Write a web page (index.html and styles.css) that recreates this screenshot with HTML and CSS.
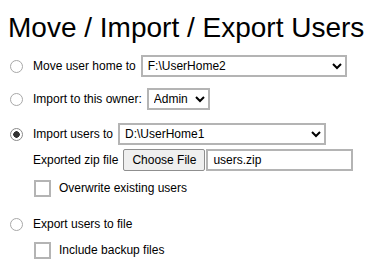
FILE: index.html
```html
<!DOCTYPE html>
<html lang="en">
<head>
    <meta charset="UTF-8">
    <title>Move / Import / Export Users</title>
    <link rel="stylesheet" href="styles.css">
</head>
<body>
    <h1 class="title">Move / Import / Export Users</h1>

    <div class="option row-move">
        <input type="radio" name="action" class="radio" id="optMove">
        <label for="optMove">Move user home to</label>
        <select class="select select-home">
            <option>F:\UserHome2</option>
        </select>
    </div>

    <div class="option row-owner">
        <input type="radio" name="action" class="radio" id="optOwner">
        <label for="optOwner">Import to this owner:</label>
        <select class="select select-owner">
            <option>Admin</option>
        </select>
    </div>

    <div class="option row-import">
        <input type="radio" name="action" class="radio" id="optImport" checked>
        <label for="optImport">Import users to</label>
        <select class="select select-import">
            <option>D:\UserHome1</option>
        </select>
    </div>

    <div class="sub row-file">
        <span>Exported zip file</span>
        <button class="file-button">Choose File</button>
        <input type="text" class="file-name" value="users.zip" readonly>
    </div>

    <div class="sub row-check">
        <input type="checkbox" class="check" id="overwrite">
        <label for="overwrite">Overwrite existing users</label>
    </div>

    <div class="option row-export">
        <input type="radio" name="action" class="radio" id="optExport">
        <label for="optExport">Export users to file</label>
    </div>

    <div class="sub row-backup">
        <input type="checkbox" class="check" id="backup">
        <label for="backup">Include backup files</label>
    </div>
</body>
</html>
```

FILE: styles.css
```css
body {
    margin: 8px;
    font-family: "Liberation Sans", Arial, sans-serif;
    font-size: 12px;
    color: #000;
    background: #fff;
}

.title {
    font-size: 28px;
    font-weight: normal;
    line-height: 32px;
    margin: 4px 0 0;
}

.option,
.sub {
    display: flex;
    align-items: center;
    height: 22px;
}

.option {
    padding-left: 2px;
}

.sub {
    padding-left: 25px;
}

.row-move { margin-top: 11px; }
.row-owner { margin-top: 11px; }
.row-import { margin-top: 13px; }
.row-file { margin-top: 4px; }
.row-check { margin-top: 8px; height: 18px; }
.row-export { margin-top: 16px; }
.row-backup { margin-top: 6px; height: 18px; }

.radio {
    appearance: none;
    width: 13px;
    height: 13px;
    margin: 0 10px 0 0;
    border: 1px solid #a8a8a8;
    border-radius: 50%;
    background: #fff;
    flex-shrink: 0;
}

.radio:checked {
    border-color: #8a8a8a;
    background: radial-gradient(circle, #333 0 3px, #fff 3.5px);
}

.check {
    appearance: none;
    width: 17px;
    height: 17px;
    margin: 0 8px 0 1px;
    border: 2px solid #b4b4b4;
    border-radius: 0;
    background: #fff;
    flex-shrink: 0;
}

.select {
    font-family: inherit;
    font-size: 12px;
    height: 22px;
    margin-left: 5px;
    padding: 0 1px;
    border: 2px solid #b4b4b4;
    border-radius: 0;
    background: #fff;
    color: #000;
}

.select-home { width: 206px; }
.select-owner { width: 63px; }
.select-import { width: 208px; }

.file-button {
    font-family: inherit;
    font-size: 12px;
    height: 22px;
    margin-left: 5px;
    padding: 0 8px;
    border: 1px solid #8f8f8f;
    border-radius: 2px;
    background: #efefef;
    color: #000;
}

.file-name {
    font-family: inherit;
    font-size: 12px;
    width: 147px;
    height: 22px;
    box-sizing: border-box;
    margin-left: 1px;
    padding: 0 5px;
    border: 2px solid #b4b4b4;
    border-radius: 0;
    color: #000;
}
```
